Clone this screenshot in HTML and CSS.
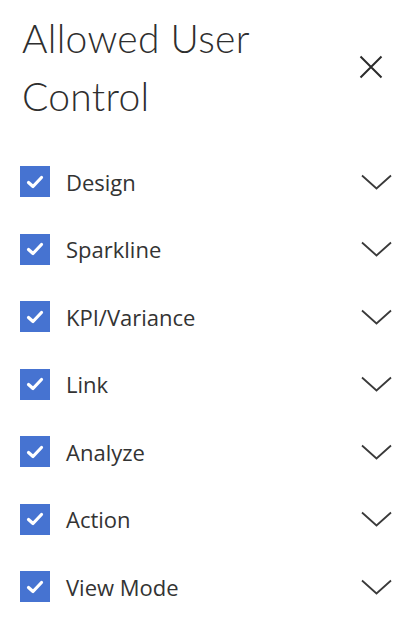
FILE: index.html
```html
<!DOCTYPE html>
<html>
<head>
<meta charset="utf-8">
<link rel="stylesheet" href="styles.css">
</head>
<body>
<div class="panel">
  <div class="header">
    <h1 class="title">Allowed User<br>Control</h1>
    <button class="close" aria-label="Close">
      <svg width="24" height="24" viewBox="0 0 24 24"><path d="M1.5 1.5 L22.5 22.5 M22.5 1.5 L1.5 22.5" stroke="#2b2b2b" stroke-width="2" fill="none"/></svg>
    </button>
  </div>
  <ul class="list">
    <li class="row"><span class="check"><svg width="20" height="20" viewBox="0 0 20 20"><path d="M3.5 10.5 L8 14.5 L16.5 5.5" stroke="#fff" stroke-width="3.2" fill="none" stroke-linecap="round" stroke-linejoin="round"/></svg></span><span class="label">Design</span><svg class="chev" width="31" height="16" viewBox="0 0 31 16"><path d="M1 1.5 L15.5 14.5 L30 1.5" stroke="#3a3a3a" stroke-width="1.8" fill="none"/></svg></li>
    <li class="row"><span class="check"><svg width="20" height="20" viewBox="0 0 20 20"><path d="M3.5 10.5 L8 14.5 L16.5 5.5" stroke="#fff" stroke-width="3.2" fill="none" stroke-linecap="round" stroke-linejoin="round"/></svg></span><span class="label">Sparkline</span><svg class="chev" width="31" height="16" viewBox="0 0 31 16"><path d="M1 1.5 L15.5 14.5 L30 1.5" stroke="#3a3a3a" stroke-width="1.8" fill="none"/></svg></li>
    <li class="row"><span class="check"><svg width="20" height="20" viewBox="0 0 20 20"><path d="M3.5 10.5 L8 14.5 L16.5 5.5" stroke="#fff" stroke-width="3.2" fill="none" stroke-linecap="round" stroke-linejoin="round"/></svg></span><span class="label">KPI/Variance</span><svg class="chev" width="31" height="16" viewBox="0 0 31 16"><path d="M1 1.5 L15.5 14.5 L30 1.5" stroke="#3a3a3a" stroke-width="1.8" fill="none"/></svg></li>
    <li class="row"><span class="check"><svg width="20" height="20" viewBox="0 0 20 20"><path d="M3.5 10.5 L8 14.5 L16.5 5.5" stroke="#fff" stroke-width="3.2" fill="none" stroke-linecap="round" stroke-linejoin="round"/></svg></span><span class="label">Link</span><svg class="chev" width="31" height="16" viewBox="0 0 31 16"><path d="M1 1.5 L15.5 14.5 L30 1.5" stroke="#3a3a3a" stroke-width="1.8" fill="none"/></svg></li>
    <li class="row"><span class="check"><svg width="20" height="20" viewBox="0 0 20 20"><path d="M3.5 10.5 L8 14.5 L16.5 5.5" stroke="#fff" stroke-width="3.2" fill="none" stroke-linecap="round" stroke-linejoin="round"/></svg></span><span class="label">Analyze</span><svg class="chev" width="31" height="16" viewBox="0 0 31 16"><path d="M1 1.5 L15.5 14.5 L30 1.5" stroke="#3a3a3a" stroke-width="1.8" fill="none"/></svg></li>
    <li class="row"><span class="check"><svg width="20" height="20" viewBox="0 0 20 20"><path d="M3.5 10.5 L8 14.5 L16.5 5.5" stroke="#fff" stroke-width="3.2" fill="none" stroke-linecap="round" stroke-linejoin="round"/></svg></span><span class="label">Action</span><svg class="chev" width="31" height="16" viewBox="0 0 31 16"><path d="M1 1.5 L15.5 14.5 L30 1.5" stroke="#3a3a3a" stroke-width="1.8" fill="none"/></svg></li>
    <li class="row"><span class="check"><svg width="20" height="20" viewBox="0 0 20 20"><path d="M3.5 10.5 L8 14.5 L16.5 5.5" stroke="#fff" stroke-width="3.2" fill="none" stroke-linecap="round" stroke-linejoin="round"/></svg></span><span class="label">View Mode</span><svg class="chev" width="31" height="16" viewBox="0 0 31 16"><path d="M1 1.5 L15.5 14.5 L30 1.5" stroke="#3a3a3a" stroke-width="1.8" fill="none"/></svg></li>
  </ul>
</div>
</body>
</html>
```

FILE: styles.css
```css
html, body {
  margin: 0;
  padding: 0;
  background: #ffffff;
}

body {
  font-family: Lato, "Noto Sans", sans-serif;
  color: #2b2b2b;
}

.panel {
  padding: 0 20px 0 20px;
}

.header {
  display: flex;
  justify-content: space-between;
  align-items: flex-start;
  padding-top: 9px;
}

.title {
  margin: 0;
  font-weight: 300;
  font-size: 39px;
  line-height: 58px;
  color: #2e2e2e;
  padding-left: 2px;
  letter-spacing: 0.3px;
}

.close {
  border: none;
  background: none;
  padding: 0;
  margin: 46px 9px 0 0;
  width: 24px;
  height: 24px;
  display: flex;
}

.list {
  list-style: none;
  margin: 0;
  padding: 0;
  padding-top: 41px;
  display: flex;
  flex-direction: column;
  gap: 36.5px;
}

.row {
  display: flex;
  align-items: center;
  height: 31px;
}

.check {
  width: 30px;
  height: 31px;
  background: #4673d1;
  display: flex;
  align-items: center;
  justify-content: center;
  flex: none;
}

.label {
  margin-left: 16px;
  font-family: "Open Sans", Lato, sans-serif;
  font-size: 22px;
  color: #333333;
  flex: 1;
}

.chev {
  flex: none;
  margin-right: 0;
}
```
